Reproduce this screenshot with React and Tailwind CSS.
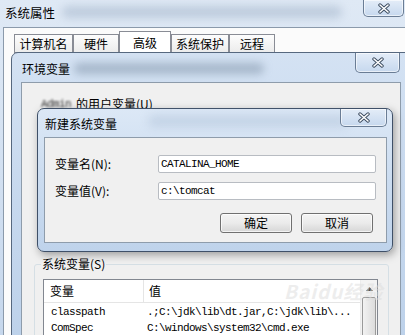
import React from 'react';

const cjk = "font-['Noto_Sans_CJK_SC','Noto_Sans',sans-serif]";
const mono = "font-['Liberation_Mono','Noto_Sans_CJK_SC',monospace] text-[11px] tracking-[-0.6px]";

function CloseGlyph() {
  return (
    <svg width="16" height="11" viewBox="0 0 16 11">
      <path d="M4 2 L12 9 M12 2 L4 9" stroke="#3a4a5e" strokeWidth="3.4" strokeLinecap="round" />
      <path d="M4 2 L12 9 M12 2 L4 9" stroke="#ffffff" strokeWidth="1.6" strokeLinecap="round" />
    </svg>
  );
}

function CloseButton({ className }) {
  return (
    <div
      className={`absolute flex items-center justify-center border border-t-0 border-[#6a7d95] rounded-b-[5px] bg-gradient-to-b from-[#e4edf8] to-[#c6d8ee] shadow-[inset_0_0_0_1px_rgba(255,255,255,0.6)] ${className}`}
    >
      <CloseGlyph />
    </div>
  );
}

function Tab({ label, w, active }) {
  return (
    <div
      className={`flex items-center justify-center border border-[#898c95] ${w} ${
        active ? 'h-[22px] bg-white border-b-0' : 'h-[19px] bg-gradient-to-b from-[#fdfdfd] to-[#ececec]'
      }`}
    >
      {label}
    </div>
  );
}

function Button({ label }) {
  return (
    <div className="w-[72px] h-[20px] flex items-center justify-center rounded-[3px] border border-[#707070] bg-gradient-to-b from-[#f4f4f4] via-[#ebebeb] to-[#d6d6d6] shadow-[inset_0_0_0_1px_rgba(255,255,255,0.7)]">
      {label}
    </div>
  );
}

export default function App() {
  return (
    <div className={`relative w-[405px] h-[335px] overflow-hidden bg-[#cddcee] text-[12px] leading-[14px] text-black ${cjk}`}>
      {/* 系统属性 */}
      <div className="absolute left-0 top-0 w-[420px] h-[360px] flex flex-col bg-gradient-to-b from-[#dfe9f5] to-[#c4d6ec]">
        <div className="relative shrink-0 h-[27px] flex items-center pl-[5px] pb-[1px]">
          <div className="absolute left-[62px] top-[6px] w-[280px] h-[12px] rounded-full bg-[#8ea2bb]/40 blur-[4px]" />
          <span className="relative text-[12.5px]">系统属性</span>
          <CloseButton className="right-[16px] top-0 w-[41px] h-[17px]" />
        </div>
        <div className="ml-[3px] flex-1 min-h-0 bg-[#fbfbfb] border-l border-t border-[#8b9aab] pt-[3px] pl-[10px]">
          <div className="flex items-end h-[22px]">
            <Tab label="计算机名" w="w-[59px]" />
            <Tab label="硬件" w="w-[46px]" />
            <Tab label="高级" w="w-[52px]" active />
            <Tab label="系统保护" w="w-[58px]" />
            <Tab label="远程" w="w-[46px]" />
          </div>
        </div>
      </div>

      {/* 环境变量 */}
      <div className="absolute left-[11px] top-[52px] w-[400px] h-[300px] flex flex-col rounded-tl-[7px] border border-[#56687f] bg-gradient-to-b from-[#d4e2f3] via-[#c6d8ee] to-[#bcd1ea]">
        <div className="relative shrink-0 h-[29px] flex items-center pl-[10px] pt-[2px]">
          <div className="absolute left-[62px] top-[10px] w-[190px] h-[11px] rounded-full bg-[#6e8299]/45 blur-[4px]" />
          <span className="relative">环境变量</span>
          <CloseButton className="right-[10px] top-0 w-[45px] h-[20px]" />
        </div>
        <div className="ml-[9px] w-[380px] flex-1 min-h-0 overflow-hidden bg-[#f0f0f0] border border-[#8e9cab] flex flex-col">
          <div className="shrink-0 h-[174px] pt-[14px] pl-[19px] flex items-start gap-[5px]">
            <span className={`blur-[1.2px] opacity-80 ${mono}`}>Admin</span>
            <span>的用户变量(U)</span>
          </div>
          <fieldset className="shrink-0 ml-[12px] mr-[11px] border border-[#d5dfe5] rounded-[3px] pl-[8px] pr-[10px] pt-[8px]">
            <legend className="-ml-[2px] px-[1px]">系统变量(S)</legend>
            <div className="relative h-[80px] bg-white border border-[#828790] flex">
              <div className="flex-1 flex flex-col">
                <div className="relative h-[23px] flex items-center border-b border-[#e5e5e5]">
                  <div className="w-[100px] h-full flex items-center pl-[6px] border-r border-[#e5e5e5]">变量</div>
                  <div className="pl-[5px]">值</div>
                  <div className="absolute left-[240px] top-[1px] text-[19px] leading-[20px] font-bold italic text-[#dcdcdc]/50 tracking-[1px] whitespace-nowrap">
                    Baidu经验
                  </div>
                </div>
                <div className={`h-[16px] flex items-center mt-[1px] ${mono}`}>
                  <div className="w-[100px] pl-[7px]">classpath</div>
                  <div className="pl-[3px] whitespace-nowrap">.;C:\jdk\lib\dt.jar,C:\jdk\lib\...</div>
                </div>
                <div className={`h-[16px] flex items-center ${mono}`}>
                  <div className="w-[100px] pl-[7px]">ComSpec</div>
                  <div className="pl-[3px] whitespace-nowrap">C:\windows\system32\cmd.exe</div>
                </div>
              </div>
              <div className="w-[17px] bg-[#f3f3f3] border-l border-[#ececec] flex flex-col items-center">
                <div className="h-[17px] flex items-center justify-center">
                  <svg width="7" height="4" viewBox="0 0 7 4">
                    <path d="M0 4 L3.5 0 L7 4 Z" fill="#4d4d4d" />
                  </svg>
                </div>
                <div className="w-[14px] h-[40px] rounded-[2px] border border-[#9a9a9a] bg-gradient-to-r from-[#f2f2f2] to-[#dcdcdc]" />
              </div>
            </div>
          </fieldset>
        </div>
      </div>

      {/* 新建系统变量 */}
      <div className="absolute left-[37px] top-[108px] w-[356px] h-[144px] flex flex-col rounded-[7px] border border-[#3f5068] bg-gradient-to-b from-[#dce8f6] via-[#cbdcf0] to-[#bfd3eb] shadow-[2px_3px_8px_rgba(0,0,0,0.35)]">
        <div className="relative shrink-0 h-[28px] flex items-center pl-[7px] pt-[1px]">
          <div className="absolute left-[110px] top-[6px] w-[200px] h-[12px] rounded-full bg-[#9fb3ca]/35 blur-[5px]" />
          <span className="relative">新建系统变量</span>
          <CloseButton className="right-[5px] top-0 w-[47px] h-[18px]" />
        </div>
        <div className="ml-[6px] w-[343px] h-[106px] bg-[#f0f0f0] border border-[#8e9cab] pt-[17px]">
          <div className="flex items-center">
            <div className="w-[113px] pl-[10px]">变量名(N):</div>
            <div className={`w-[218px] h-[18px] flex items-center pl-[2px] bg-white border border-[#b8bcc2] rounded-[2px] ${mono}`}>
              CATALINA_HOME
            </div>
          </div>
          <div className="flex items-center mt-[9px]">
            <div className="w-[113px] pl-[10px]">变量值(V):</div>
            <div className={`w-[218px] h-[18px] flex items-center pl-[2px] bg-white border border-[#b8bcc2] rounded-[2px] ${mono}`}>
              c:\tomcat
            </div>
          </div>
          <div className="flex justify-end gap-[9px] pr-[13px] mt-[13px]">
            <Button label="确定" />
            <Button label="取消" />
          </div>
        </div>
      </div>
    </div>
  );
}
